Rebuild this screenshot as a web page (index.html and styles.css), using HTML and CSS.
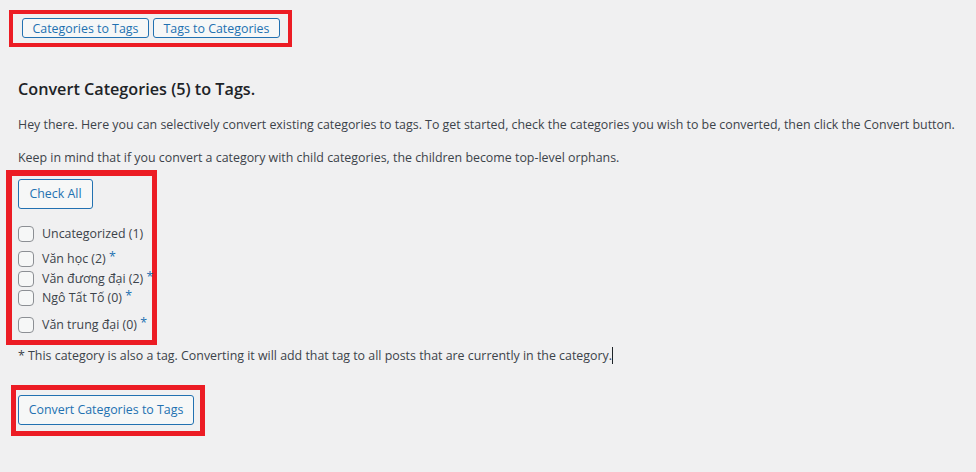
FILE: index.html
```html
<!DOCTYPE html>
<html lang="vi">
<head>
<meta charset="utf-8">
<title>Convert Categories to Tags</title>
<link rel="stylesheet" href="styles.css">
</head>
<body>
<div class="wrap">
  <div class="mark mark-nav">
    <button class="btn btn-sm" type="button">Categories to Tags</button>
    <button class="btn btn-sm" type="button">Tags to Categories</button>
  </div>

  <h2 class="title">Convert Categories (5) to Tags.</h2>
  <p class="text">Hey there. Here you can selectively convert existing categories to tags. To get started, check the categories you wish to be converted, then click the Convert button.</p>
  <p class="text">Keep in mind that if you convert a category with child categories, the children become top-level orphans.</p>

  <div class="mark mark-list">
    <button class="btn btn-md" type="button">Check All</button>
    <ul class="cats">
      <li class="cat"><input class="cb" type="checkbox"><span class="cat-name">Uncategorized (1)</span></li>
      <li class="cat"><input class="cb" type="checkbox"><span class="cat-name">Văn học (2) <span class="star">*</span></span></li>
      <li class="cat"><input class="cb" type="checkbox"><span class="cat-name">Văn đương đại (2) <span class="star">*</span></span></li>
      <li class="cat"><input class="cb" type="checkbox"><span class="cat-name">Ngô Tất Tố (0) <span class="star">*</span></span></li>
      <li class="cat"><input class="cb" type="checkbox"><span class="cat-name">Văn trung đại (0) <span class="star">*</span></span></li>
    </ul>
  </div>

  <p class="text note">* This category is also a tag. Converting it will add that tag to all posts that are currently in the category.<span class="caret"></span></p>

  <div class="mark mark-submit">
    <button class="btn btn-md" type="button">Convert Categories to Tags</button>
  </div>
</div>
</body>
</html>
```

FILE: styles.css
```css
html, body {
  margin: 0;
  padding: 0;
  background: #f0f0f1;
}

body {
  font-family: "Open Sans", "Noto Sans", sans-serif;
  font-size: 12.4px;
  color: #3c434a;
  overflow: hidden;
}

.wrap {
  padding: 10px 0 0 18px;
}

.mark {
  border: 4px solid #ec1c24;
  box-sizing: border-box;
}

.mark-nav {
  display: inline-flex;
  gap: 4px;
  margin-left: -9px;
  padding: 4px 8px 5px 9px;
}

.btn {
  font-family: inherit;
  font-size: 12.4px;
  color: #2271b1;
  background: #f6f7f7;
  border: 1px solid #2271b1;
  border-radius: 3px;
  margin: 0;
  cursor: pointer;
  box-sizing: border-box;
  white-space: nowrap;
}

.btn-sm {
  height: 20px;
  line-height: 19px;
  padding: 0;
  width: 127px;
}

.btn-md {
  height: 30px;
  line-height: 28px;
  padding: 0;
}

.title {
  font-size: 16.2px;
  font-weight: 600;
  color: #1d2327;
  margin: 30px 0 0;
  line-height: 24px;
}

.text {
  margin: 13px 0 0;
  line-height: 19.5px;
}

.title + .text {
  margin-top: 14px;
}

.mark-list {
  width: 151px;
  border-width: 6px 5px 5px 6px;
  margin: 3px 0 0 -12px;
  padding: 3px 0 7px 6px;
}

.mark-list .btn-md {
  width: 75px;
}

.cats {
  list-style: none;
  margin: 0;
  padding: 0;
}

.cat {
  display: flex;
  align-items: center;
  gap: 8px;
  height: 16px;
  white-space: nowrap;
}

.cat:nth-child(1) { margin-top: 17px; }
.cat:nth-child(2) { margin-top: 9px; }
.cat:nth-child(3) { margin-top: 4px; }
.cat:nth-child(4) { margin-top: 3px; }
.cat:nth-child(5) { margin-top: 11px; }

.cb {
  appearance: none;
  -webkit-appearance: none;
  width: 16px;
  height: 16px;
  margin: 0;
  border: 1px solid #8c8f94;
  border-radius: 4px;
  background: #f6f7f7;
  box-sizing: border-box;
  flex: none;
}

.cat-name {
  line-height: 16px;
}

.star {
  color: #2271b1;
  position: relative;
  top: -2px;
}

.note {
  margin-top: 1px;
}

.caret {
  display: inline-block;
  width: 1px;
  height: 17px;
  background: #1d2327;
  vertical-align: -4px;
}

.mark-submit {
  display: inline-block;
  border-width: 5px;
  margin: 19px 0 0 -7px;
  padding: 5px 6px 6px 2px;
}

.mark-submit .btn-md {
  width: 176px;
  display: block;
}
```
